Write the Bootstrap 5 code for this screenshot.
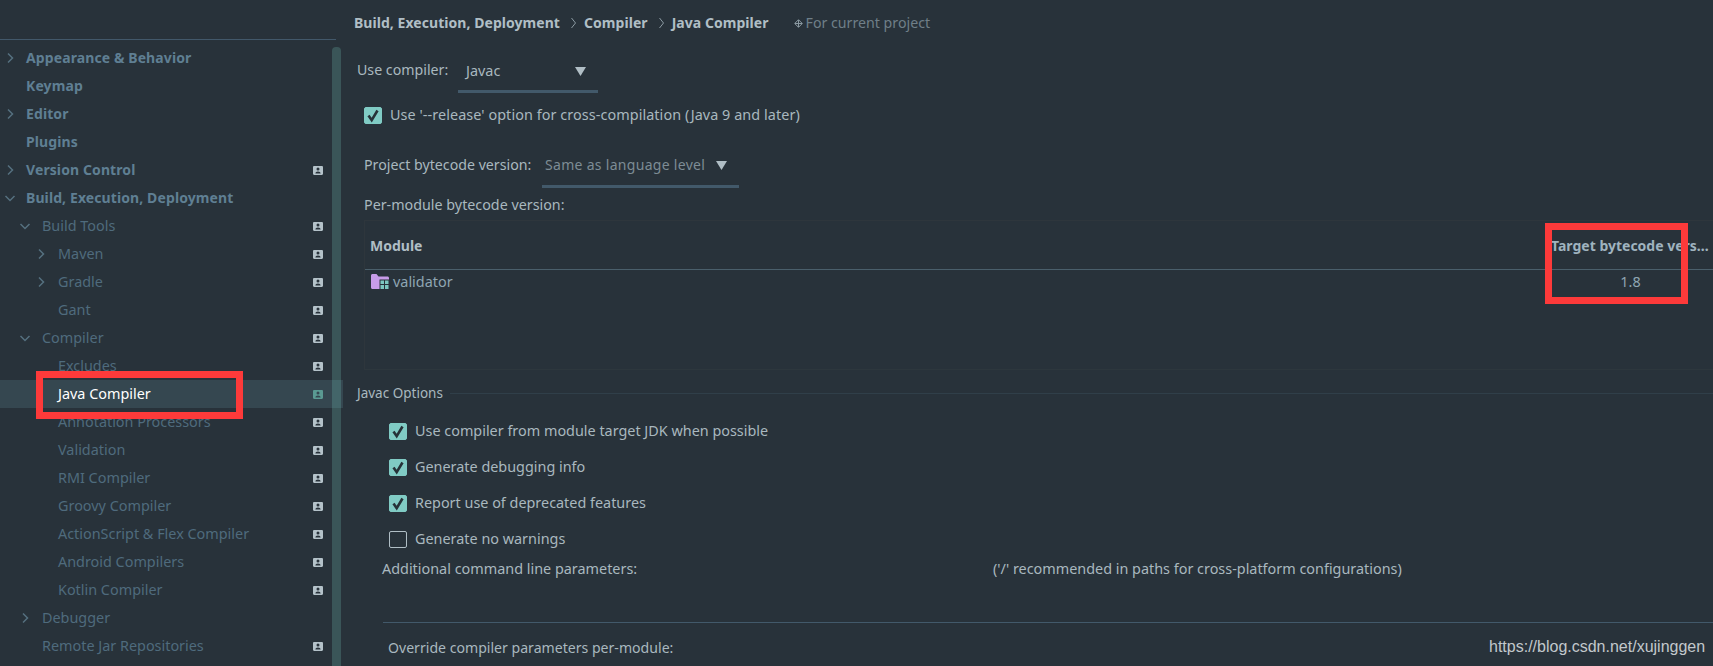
<!DOCTYPE html>
<html lang="en">
<head>
<meta charset="utf-8">
<title>Java Compiler settings</title>
<link rel="stylesheet" href="https://cdn.jsdelivr.net/npm/bootstrap@5.3.0/dist/css/bootstrap.min.css">
<style>
html,body{height:666px;overflow:hidden;background:#28323a}
body{font-family:"Noto Sans","Liberation Sans",sans-serif;font-size:14.4px;line-height:22px;color:#a9b8bf}
.frame{width:1713px;height:666px;overflow:hidden;position:relative}
.side{width:343px;flex:none;position:relative;overflow:hidden}
.side-top{height:40px;width:336px;border-bottom:1px solid #42586a;margin-bottom:4px}
.tree-row{height:28px;color:#4f6b7d;padding-right:20px;white-space:nowrap}
.tree-row.top{color:#5f7f93;font-weight:700;font-size:14px;letter-spacing:.1px}
.tree-row.sel{background:#354750;color:#fff}
.lv0{padding-left:3px}.lv0 .slot{width:23px}
.lv1{padding-left:18px}.lv1 .slot{width:24px}
.lv2{padding-left:34px}.lv2 .slot{width:24px}
.slot{flex:none;height:14px;display:flex}
.chev{width:14px;height:14px;fill:none;stroke:#55707f;stroke-width:1.5}
.pin{width:10px;height:9px;margin-left:auto;flex:none;color:#b4c2c9}
.sel .pin{color:#5a9a92}
.sbar{position:absolute;left:332px;top:47px;bottom:0;width:9px;border-radius:4px 4px 0 0;background:rgba(110,190,180,.25)}
.pane{min-width:0;flex:1 1 auto}
.crumbs{height:44px;padding:2px 0 0 11px;white-space:nowrap}
.crumbs b{color:#b0bec5;font-weight:700;font-size:14px;letter-spacing:.05px}
.sep-ico{width:7px;height:12px;fill:none;stroke:#8b9aa2;stroke-width:1;margin:0 7px 0 10px}
.scope{color:#6f7f88;font-size:14.2px}
.scope-ico{width:9px;height:9px;margin:0 3px 0 25px;color:#8b9aa2}
.combo-row{white-space:nowrap}
.r-comp{padding:15px 0 0 14px}
.r-byte{padding:28px 0 0 21px}
.l-comp{width:101px;flex:none;font-size:14.2px}
.l-byte{width:178px;flex:none;font-size:14.2px}
.combo{height:34px;padding-bottom:9px;border-bottom:3px solid #42596a;padding-right:12px;flex:none}
.c-comp{width:140px;padding:1px 12px 8px 8px}
.c-byte{width:197px;padding-left:3px;color:#7d8c95;font-size:14px;letter-spacing:.3px}
.tri{width:11px;height:9px;margin-left:auto;fill:#b0bec5;flex:none}
.form-check-input.chk{width:18px;height:17px;margin:0;flex:none;border-radius:2px;background-color:transparent;border:1px solid #b0bec5;box-shadow:none}
.form-check-input.chk:checked{background-color:#80cbc4;border-color:#80cbc4;background-size:18px 17px;background-image:url("data:image/svg+xml,%3csvg xmlns='http://www.w3.org/2000/svg' viewBox='0 0 18 17'%3e%3cpath fill='none' stroke='%23263238' stroke-width='2.6' d='M4.500 8.500l3.200 4.700L13.500 3.500'/%3e%3c/svg%3e")}
.opt{height:22px;gap:8px;white-space:nowrap}
.o-rel{margin:11px 0 0 21px;letter-spacing:.07px}
.o-sub{margin:14px 0 0 46px}
.o-first{margin-top:16px}
.permod{margin:6px 0 0 21px;font-size:14.3px}
.mods{margin:4px 0 0 21px;height:150px;border-top:1px solid #2e363c;border-left:1px solid #2e363c;border-bottom:1px solid #2d373d}
.mods table{table-layout:fixed;width:100%;--bs-table-bg:transparent;--bs-table-color:#a9b8bf;margin:0;border-color:transparent}
.mods th{height:48px;font-weight:700;font-size:14px;color:#b0bec5;vertical-align:middle;padding:2px 0 0 5px;border-bottom:1px solid #4a5f6b;white-space:nowrap;overflow:hidden}
.mods th.tgt{width:162px;padding-left:0;color:#9fb3bf}
.mods td{height:26px;padding:0 0 1px 6px;vertical-align:middle;border:0}
.mods td.tgtv{padding:0 3px 1px 0;text-align:center;color:#8fa6b3}
.modname{color:#8fa6b3;gap:4px}
.folder{width:18px;height:15px;flex:none}
.legend{height:22px;margin:12px 0 0 14px;gap:7px;font-size:13.5px}
.legend-line{flex:1 1 auto;height:1px;background:#303f49}
.params{margin:8px 0 0 39px;white-space:nowrap}
.l-par{width:611px;flex:none}
.divider{height:1px;background:#42596a;margin:42px 0 0 40px}
.override{margin:14px 0 0 45px;font-size:14.1px}
.redbox{position:absolute;border:7px solid #fd3a3a;pointer-events:none}
.rb-a{left:36px;top:371px;width:207px;height:48px}
.rb-b{left:1545px;top:223px;width:143px;height:81px}
.stamp{position:absolute;left:1489px;top:636px;font-family:"Liberation Sans",sans-serif;font-size:16px;color:#c2c8cc;white-space:nowrap}
</style>
</head>
<body>
<svg width="0" height="0" class="position-absolute">
<symbol id="cr" viewBox="0 0 14 14"><path d="M5 2.500l4.500 4.500L5 11.500"/></symbol>
<symbol id="cd" viewBox="0 0 14 14"><path d="M2.500 5l4.500 4.500L11.500 5"/></symbol>
<symbol id="pn" viewBox="0 0 10 9"><path fill="currentColor" fill-rule="evenodd" d="M1.200 0h7.600C9.500 0 10 .5 10 1.200v6.600C10 8.500 9.500 9 8.800 9H1.200C.5 9 0 8.500 0 7.800V1.200C0 .5.500 0 1.200 0zM5 1.600a1.500 1.500 0 1 0 0 3 1.500 1.500 0 0 0 0-3zM2.400 7.500h5.200c0-1.300-1-2.100-2.600-2.100s-2.600.8-2.600 2.100z"/></symbol>
</svg>
<div class="frame d-flex">
  <div class="side">
    <div class="side-top"></div>
    <div class="tree-row top lv0 d-flex align-items-center"><span class="slot"><svg class="chev"><use href="#cr"/></svg></span>Appearance &amp; Behavior</div>
    <div class="tree-row top lv0 d-flex align-items-center"><span class="slot"></span>Keymap</div>
    <div class="tree-row top lv0 d-flex align-items-center"><span class="slot"><svg class="chev"><use href="#cr"/></svg></span>Editor</div>
    <div class="tree-row top lv0 d-flex align-items-center"><span class="slot"></span>Plugins</div>
    <div class="tree-row top lv0 d-flex align-items-center"><span class="slot"><svg class="chev"><use href="#cr"/></svg></span>Version Control<svg class="pin"><use href="#pn"/></svg></div>
    <div class="tree-row top lv0 d-flex align-items-center"><span class="slot"><svg class="chev"><use href="#cd"/></svg></span>Build, Execution, Deployment</div>
    <div class="tree-row lv1 d-flex align-items-center"><span class="slot"><svg class="chev"><use href="#cd"/></svg></span>Build Tools<svg class="pin"><use href="#pn"/></svg></div>
    <div class="tree-row lv2 d-flex align-items-center"><span class="slot"><svg class="chev"><use href="#cr"/></svg></span>Maven<svg class="pin"><use href="#pn"/></svg></div>
    <div class="tree-row lv2 d-flex align-items-center"><span class="slot"><svg class="chev"><use href="#cr"/></svg></span>Gradle<svg class="pin"><use href="#pn"/></svg></div>
    <div class="tree-row lv2 d-flex align-items-center"><span class="slot"></span>Gant<svg class="pin"><use href="#pn"/></svg></div>
    <div class="tree-row lv1 d-flex align-items-center"><span class="slot"><svg class="chev"><use href="#cd"/></svg></span>Compiler<svg class="pin"><use href="#pn"/></svg></div>
    <div class="tree-row lv2 d-flex align-items-center"><span class="slot"></span>Excludes<svg class="pin"><use href="#pn"/></svg></div>
    <div class="tree-row sel lv2 d-flex align-items-center"><span class="slot"></span>Java Compiler<svg class="pin"><use href="#pn"/></svg></div>
    <div class="tree-row lv2 d-flex align-items-center"><span class="slot"></span>Annotation Processors<svg class="pin"><use href="#pn"/></svg></div>
    <div class="tree-row lv2 d-flex align-items-center"><span class="slot"></span>Validation<svg class="pin"><use href="#pn"/></svg></div>
    <div class="tree-row lv2 d-flex align-items-center"><span class="slot"></span>RMI Compiler<svg class="pin"><use href="#pn"/></svg></div>
    <div class="tree-row lv2 d-flex align-items-center"><span class="slot"></span>Groovy Compiler<svg class="pin"><use href="#pn"/></svg></div>
    <div class="tree-row lv2 d-flex align-items-center"><span class="slot"></span>ActionScript &amp; Flex Compiler<svg class="pin"><use href="#pn"/></svg></div>
    <div class="tree-row lv2 d-flex align-items-center"><span class="slot"></span>Android Compilers<svg class="pin"><use href="#pn"/></svg></div>
    <div class="tree-row lv2 d-flex align-items-center"><span class="slot"></span>Kotlin Compiler<svg class="pin"><use href="#pn"/></svg></div>
    <div class="tree-row lv1 d-flex align-items-center"><span class="slot"><svg class="chev"><use href="#cr"/></svg></span>Debugger</div>
    <div class="tree-row lv1 d-flex align-items-center"><span class="slot"></span>Remote Jar Repositories<svg class="pin"><use href="#pn"/></svg></div>
    <div class="sbar"></div>
  </div>
  <div class="pane">
    <div class="crumbs d-flex align-items-center">
      <b>Build, Execution, Deployment</b>
      <svg class="sep-ico" viewBox="0 0 7 12"><path d="M1.500 1l4 5-4 5"/></svg>
      <b>Compiler</b>
      <svg class="sep-ico" viewBox="0 0 7 12"><path d="M1.500 1l4 5-4 5"/></svg>
      <b>Java Compiler</b>
      <svg class="scope-ico" viewBox="0 0 9 9"><path fill="none" stroke="currentColor" d="M4.500.7L8.300 4.500 4.500 8.300.7 4.500zM1 4.500h7M4.500 1v7"/></svg>
      <span class="scope">For current project</span>
    </div>
    <div class="combo-row r-comp d-flex align-items-start">
      <span class="l-comp">Use compiler:</span>
      <div class="combo c-comp d-flex align-items-center">Javac<svg class="tri" viewBox="0 0 11 9"><path d="M0 0h11L5.500 9z"/></svg></div>
    </div>
    <div class="opt o-rel d-flex align-items-center">
      <input class="form-check-input chk" type="checkbox" checked aria-label="release"><span>Use '--release' option for cross-compilation (Java 9 and later)</span>
    </div>
    <div class="combo-row r-byte d-flex align-items-start">
      <span class="l-byte">Project bytecode version:</span>
      <div class="combo c-byte d-flex align-items-center">Same as language level<svg class="tri" viewBox="0 0 11 9"><path d="M0 0h11L5.500 9z"/></svg></div>
    </div>
    <div class="permod">Per-module bytecode version:</div>
    <div class="mods">
      <table class="table">
        <thead><tr><th>Module</th><th class="tgt">Target bytecode vers...</th></tr></thead>
        <tbody><tr>
          <td><div class="modname d-flex align-items-center">
            <svg class="folder" viewBox="0 0 18 15"><path fill="#c79ce8" d="M0 1.500C0 .7.700 0 1.500 0h4l2 2.500h9c.8 0 1.500.7 1.500 1.500v9.500c0 .8-.7 1.500-1.500 1.500h-15C.7 15 0 14.300 0 13.500z"/><path fill="#28323a" d="M8.500 5.500h9.500V15H8.500z"/><path fill="#7cc8c0" d="M9.500 6.500h3.500V10H9.500zM14 6.500h3.500V10H14zM9.500 11h3.500v4H9.500zM14 11h3.500v4H14z"/></svg>
            validator</div></td>
          <td class="tgtv">1.8</td>
        </tr></tbody>
      </table>
    </div>
    <div class="legend d-flex align-items-center"><span>Javac Options</span><span class="legend-line"></span></div>
    <div class="opt o-sub o-first d-flex align-items-center"><input class="form-check-input chk" type="checkbox" checked aria-label="a"><span>Use compiler from module target JDK when possible</span></div>
    <div class="opt o-sub d-flex align-items-center"><input class="form-check-input chk" type="checkbox" checked aria-label="b"><span>Generate debugging info</span></div>
    <div class="opt o-sub d-flex align-items-center"><input class="form-check-input chk" type="checkbox" checked aria-label="c"><span>Report use of deprecated features</span></div>
    <div class="opt o-sub d-flex align-items-center"><input class="form-check-input chk" type="checkbox" aria-label="d"><span>Generate no warnings</span></div>
    <div class="params d-flex"><span class="l-par">Additional command line parameters:</span><span>('/' recommended in paths for cross-platform configurations)</span></div>
    <div class="divider"></div>
    <div class="override">Override compiler parameters per-module:</div>
  </div>
  <div class="redbox rb-a"></div>
  <div class="redbox rb-b"></div>
  <div class="stamp">https://blog.csdn.net/xujinggen</div>
</div>
<script src="https://cdn.jsdelivr.net/npm/bootstrap@5.3.0/dist/js/bootstrap.bundle.min.js"></script>
</body>
</html>
